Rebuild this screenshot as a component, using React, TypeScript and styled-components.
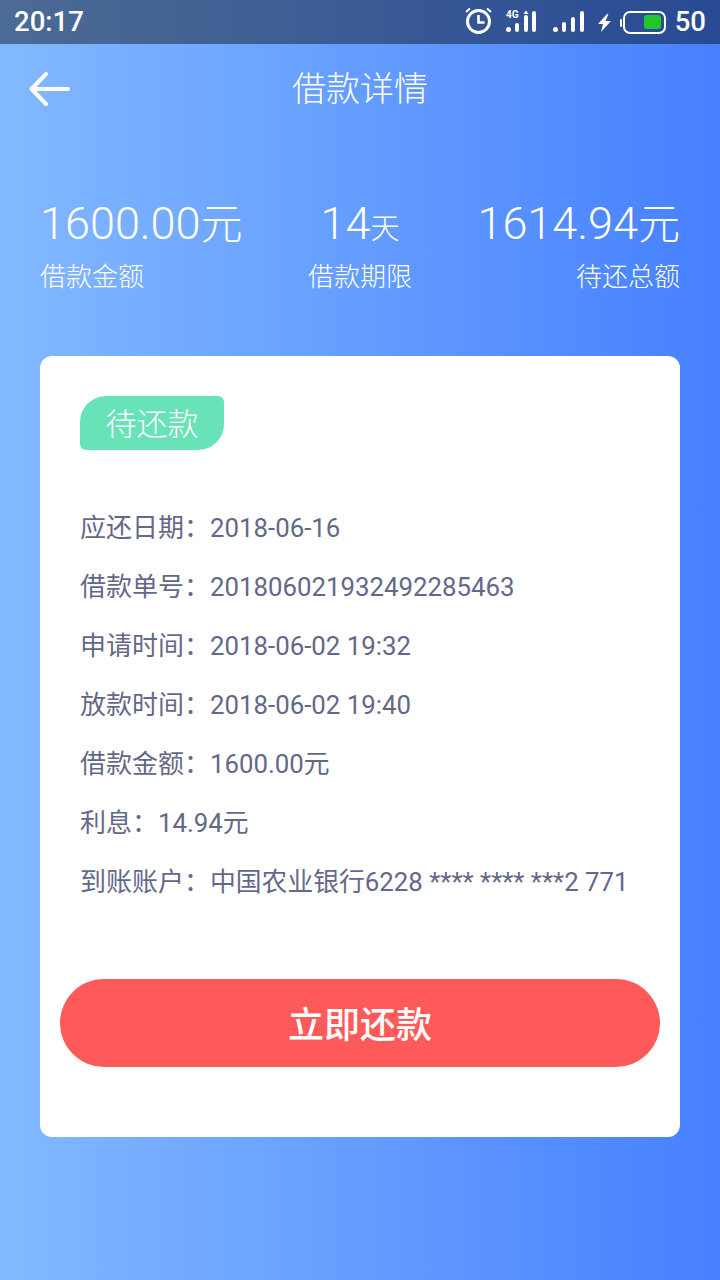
import styled, { createGlobalStyle } from "styled-components";

const GlobalStyle = createGlobalStyle`
  html, body {
    margin: 0;
    padding: 0;
  }
  body {
    font-family: Roboto, "Noto Sans CJK SC", sans-serif;
  }
`;

const Page = styled.div`
  width: 720px;
  height: 1280px;
  overflow: hidden;
  display: flex;
  flex-direction: column;
  background: linear-gradient(90deg, #83b9ff 0%, #4680ff 100%);
`;

const StatusBar = styled.div`
  height: 44px;
  padding: 0 14px;
  display: flex;
  align-items: center;
  justify-content: space-between;
  color: #fff;
  background: rgba(0, 0, 0, 0.42);
  box-sizing: border-box;
`;

const Clock = styled.span`
  font-size: 27.5px;
  font-weight: 500;
  line-height: 44px;
`;

const StatusIcons = styled.div`
  display: flex;
  align-items: center;
`;

const Battery = styled.span`
  font-size: 27.5px;
  font-weight: 500;
  line-height: 44px;
  margin-left: 8px;
`;

const NavBar = styled.div`
  height: 90px;
  padding-left: 29px;
  display: flex;
  align-items: center;
  position: relative;
`;

const NavTitle = styled.h1`
  position: absolute;
  left: 0;
  right: 0;
  margin: 0;
  text-align: center;
  color: #fff;
  font-size: 34px;
  font-weight: 300;
  line-height: 90px;
`;

const Summary = styled.div`
  margin-top: 63px;
  padding: 0 40px;
  display: flex;
  justify-content: space-between;
  color: #fff;
`;

const SummaryItem = styled.div<{ $align: string }>`
  display: flex;
  flex-direction: column;
  align-items: ${(p) => p.$align};
`;

const Amount = styled.div`
  font-size: 45px;
  font-weight: 300;
  line-height: 54px;
  white-space: nowrap;
`;

const Unit = styled.span<{ $small?: boolean }>`
  font-size: ${(p) => (p.$small ? 29 : 42)}px;
  font-weight: 300;
  line-height: 1;
`;

const SummaryLabel = styled.div`
  margin-top: 8px;
  font-size: 26px;
  font-weight: 300;
  line-height: 36px;
  white-space: nowrap;
`;

const Card = styled.div`
  margin: 61px 40px 0;
  height: 781px;
  box-sizing: border-box;
  padding: 40px 20px 0;
  background: #fff;
  border-radius: 12px;
  display: flex;
  flex-direction: column;
`;

const StatusTag = styled.div`
  margin-left: 20px;
  width: 144px;
  height: 54px;
  box-sizing: border-box;
  padding-bottom: 3px;
  display: flex;
  align-items: center;
  justify-content: center;
  background: #68e3b7;
  color: #fff;
  font-size: 31px;
  font-weight: 300;
  border-radius: 26px 6px 26px 6px;
`;

const Details = styled.div`
  margin-top: 59px;
  padding-left: 20px;
  display: flex;
  flex-direction: column;
  gap: 21px;
`;

const DetailRow = styled.div`
  font-size: 26px;
  line-height: 38px;
  color: #646888;
  white-space: nowrap;
`;

const DetailValue = styled.span`
  font-size: 25.8px;
`;

const RepayButton = styled.button`
  margin-top: 78px;
  width: 600px;
  height: 88px;
  padding: 0 0 2px;
  border: none;
  border-radius: 44px;
  background: #ff5a5a;
  color: #fff;
  font-family: inherit;
  font-size: 36px;
  font-weight: 500;
`;

const details = [
  { label: "应还日期：", value: "2018-06-16" },
  { label: "借款单号：", value: "201806021932492285463" },
  { label: "申请时间：", value: "2018-06-02 19:32" },
  { label: "放款时间：", value: "2018-06-02 19:40" },
  { label: "借款金额：", value: "1600.00元" },
  { label: "利息：", value: "14.94元" },
  { label: "到账账户：", value: "中国农业银行6228 **** **** ***2 771" },
];

// viewBox uses page coordinates so the glyphs can be read off the screenshot
const StatusGlyphs = () => (
  <svg width="204" height="44" viewBox="464 0 204 44" fill="none">
    {/* alarm */}
    <circle cx="479.5" cy="21.5" r="11" stroke="#fff" strokeWidth="3" />
    <path d="M479.5 15v7.5h6" stroke="#fff" strokeWidth="2.6" />
    <path d="M467 12l4-3.5M492 12l-4-3.5" stroke="#fff" strokeWidth="2" />
    {/* 4G signal */}
    <text x="507" y="17.5" fill="#fff" fontSize="10" fontWeight="700" fontFamily="Roboto">4G</text>
    <rect x="507" y="27" width="5" height="5" rx="2.5" fill="#fff" />
    <rect x="516" y="23" width="4" height="9" rx="2" fill="#fff" />
    <rect x="525" y="15" width="4" height="17" rx="2" fill="#fff" />
    <path d="M524.5 14l2.5-3.5 2.5 3.5z" fill="#fff" />
    <rect x="533" y="11" width="4" height="21" rx="2" fill="#fff" />
    {/* signal */}
    <rect x="554" y="27" width="5" height="5" rx="2.5" fill="#fff" />
    <rect x="563" y="22" width="4" height="10" rx="2" fill="#fff" />
    <rect x="572" y="17" width="4" height="15" rx="2" fill="#fff" />
    <rect x="581" y="11" width="4" height="21" rx="2" fill="#fff" />
    {/* charge */}
    <path d="M608 14l-9 10h5l-2 8 10-11h-5.500l3-7z" fill="#fff" />
    {/* battery */}
    <path d="M622 20v6" stroke="#fff" strokeWidth="2" strokeLinecap="round" />
    <rect x="625" y="12" width="41" height="21" rx="6" stroke="#fff" strokeWidth="2" />
    <rect x="645" y="15" width="17" height="14" rx="3" fill="#22c72a" />
  </svg>
);

const BackArrow = () => (
  <svg width="42" height="36" viewBox="0 0 42 36" fill="none">
    <path d="M39 18H3M17 3L2.500 18 17 33" stroke="#fff" strokeWidth="4" strokeLinecap="round" strokeLinejoin="round" />
  </svg>
);

export default function App() {
  return (
    <Page>
      <GlobalStyle />
      <StatusBar>
        <Clock>20:17</Clock>
        <StatusIcons>
          <StatusGlyphs />
          <Battery>50</Battery>
        </StatusIcons>
      </StatusBar>
      <NavBar>
        <BackArrow />
        <NavTitle>借款详情</NavTitle>
      </NavBar>
      <Summary>
        <SummaryItem $align="flex-start">
          <Amount>1600.00<Unit>元</Unit></Amount>
          <SummaryLabel>借款金额</SummaryLabel>
        </SummaryItem>
        <SummaryItem $align="center">
          <Amount>14<Unit $small>天</Unit></Amount>
          <SummaryLabel>借款期限</SummaryLabel>
        </SummaryItem>
        <SummaryItem $align="flex-end">
          <Amount>1614.94<Unit>元</Unit></Amount>
          <SummaryLabel>待还总额</SummaryLabel>
        </SummaryItem>
      </Summary>
      <Card>
        <StatusTag>待还款</StatusTag>
        <Details>
          {details.map((row) => (
            <DetailRow key={row.label}>
              {row.label}
              <DetailValue>{row.value}</DetailValue>
            </DetailRow>
          ))}
        </Details>
        <RepayButton>立即还款</RepayButton>
      </Card>
    </Page>
  );
}
